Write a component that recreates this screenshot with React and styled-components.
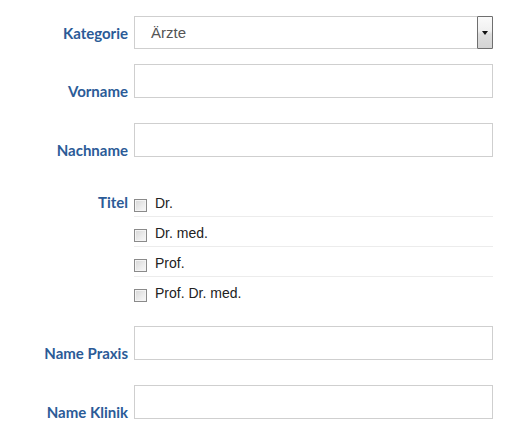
import React from "react";
import styled, { createGlobalStyle } from "styled-components";

const Global = createGlobalStyle`
  html, body { margin: 0; padding: 0; background: #fff; }
  body { font-family: "Liberation Sans", Arial, sans-serif; }
`;

const Form = styled.form`
  display: flex;
  flex-direction: column;
  padding-top: 16px;
  width: 493px;
`;

const Row = styled.div`
  display: flex;
  align-items: ${(p) => p.$align || "flex-end"};
  gap: 6px;
  margin-bottom: ${(p) => p.$mb || 0}px;
`;

const Label = styled.label`
  width: 128px;
  flex: none;
  text-align: right;
  font-family: Lato, "Open Sans", sans-serif;
  font-weight: 700;
  font-size: 15px;
  line-height: 14px;
  color: #2b5b97;
  margin-bottom: ${(p) => p.$mb ?? 0}px;
  padding-top: ${(p) => p.$pt || 0}px;
`;

const Input = styled.input`
  box-sizing: border-box;
  width: 359px;
  height: 34px;
  border: 1px solid #cfcfcf;
  background: #fff;
  margin: 0;
  padding: 0 8px;
  font: 15px "Liberation Sans", Arial, sans-serif;
`;

const Select = styled.div`
  box-sizing: border-box;
  width: 359px;
  height: 33px;
  border: 1px solid #cfcfcf;
  display: flex;
  align-items: stretch;
  background: #fff;
`;

const SelectValue = styled.span`
  flex: 1;
  display: flex;
  align-items: center;
  padding-left: 16px;
  font-size: 15px;
  color: #555;
`;

const SelectButton = styled.span`
  width: 14px;
  margin: -1px -1px -1px 0;
  border: 1px solid #6f6f6f;
  border-radius: 1px;
  background: linear-gradient(to bottom, #fafafa 0%, #f0f0f0 45%, #dedede 55%, #d4d4d4 100%);
  display: flex;
  align-items: center;
  justify-content: center;
`;

const Arrow = styled.span`
  width: 0;
  height: 0;
  border-left: 3.5px solid transparent;
  border-right: 3.5px solid transparent;
  border-top: 4px solid #111;
`;

const Checks = styled.div`
  display: flex;
  flex-direction: column;
  width: 359px;
`;

const CheckRow = styled.label`
  display: flex;
  align-items: center;
  gap: 8px;
  height: 30px;
  box-sizing: border-box;
  padding-top: 3px;
  border-bottom: 1px solid ${(p) => (p.$last ? "transparent" : "#ececec")};
  font-size: 14px;
  color: #222;
`;

const Box = styled.span`
  box-sizing: border-box;
  width: 13px;
  height: 13px;
  flex: none;
  border: 1px solid #8a8a8a;
  background: linear-gradient(135deg, #d6d6d6 0%, #ececec 60%, #f8f8f8 100%);
  box-shadow: inset 0 0 0 1px #f4f4f4;
  position: relative;
  top: 2px;
`;

const CheckText = styled.span`
  line-height: 14px;
`;

const titles = ["Dr.", "Dr. med.", "Prof.", "Prof. Dr. med."];

export default function App() {
  return (
    <>
      <Global />
      <Form>
        <Row $align="center" $mb={15}>
          <Label>Kategorie</Label>
          <Select>
            <SelectValue>Ärzte</SelectValue>
            <SelectButton>
              <Arrow />
            </SelectButton>
          </Select>
        </Row>
        <Row $mb={25}>
          <Label>Vorname</Label>
          <Input type="text" />
        </Row>
        <Row $mb={30}>
          <Label>Nachname</Label>
          <Input type="text" />
        </Row>
        <Row $align="flex-start" $mb={19}>
          <Label $pt={8}>Titel</Label>
          <Checks>
            {titles.map((t, i) => (
              <CheckRow key={t} $last={i === titles.length - 1}>
                <Box />
                <CheckText>{t}</CheckText>
              </CheckRow>
            ))}
          </Checks>
        </Row>
        <Row $mb={25}>
          <Label>Name Praxis</Label>
          <Input type="text" />
        </Row>
        <Row>
          <Label>Name Klinik</Label>
          <Input type="text" />
        </Row>
      </Form>
    </>
  );
}
